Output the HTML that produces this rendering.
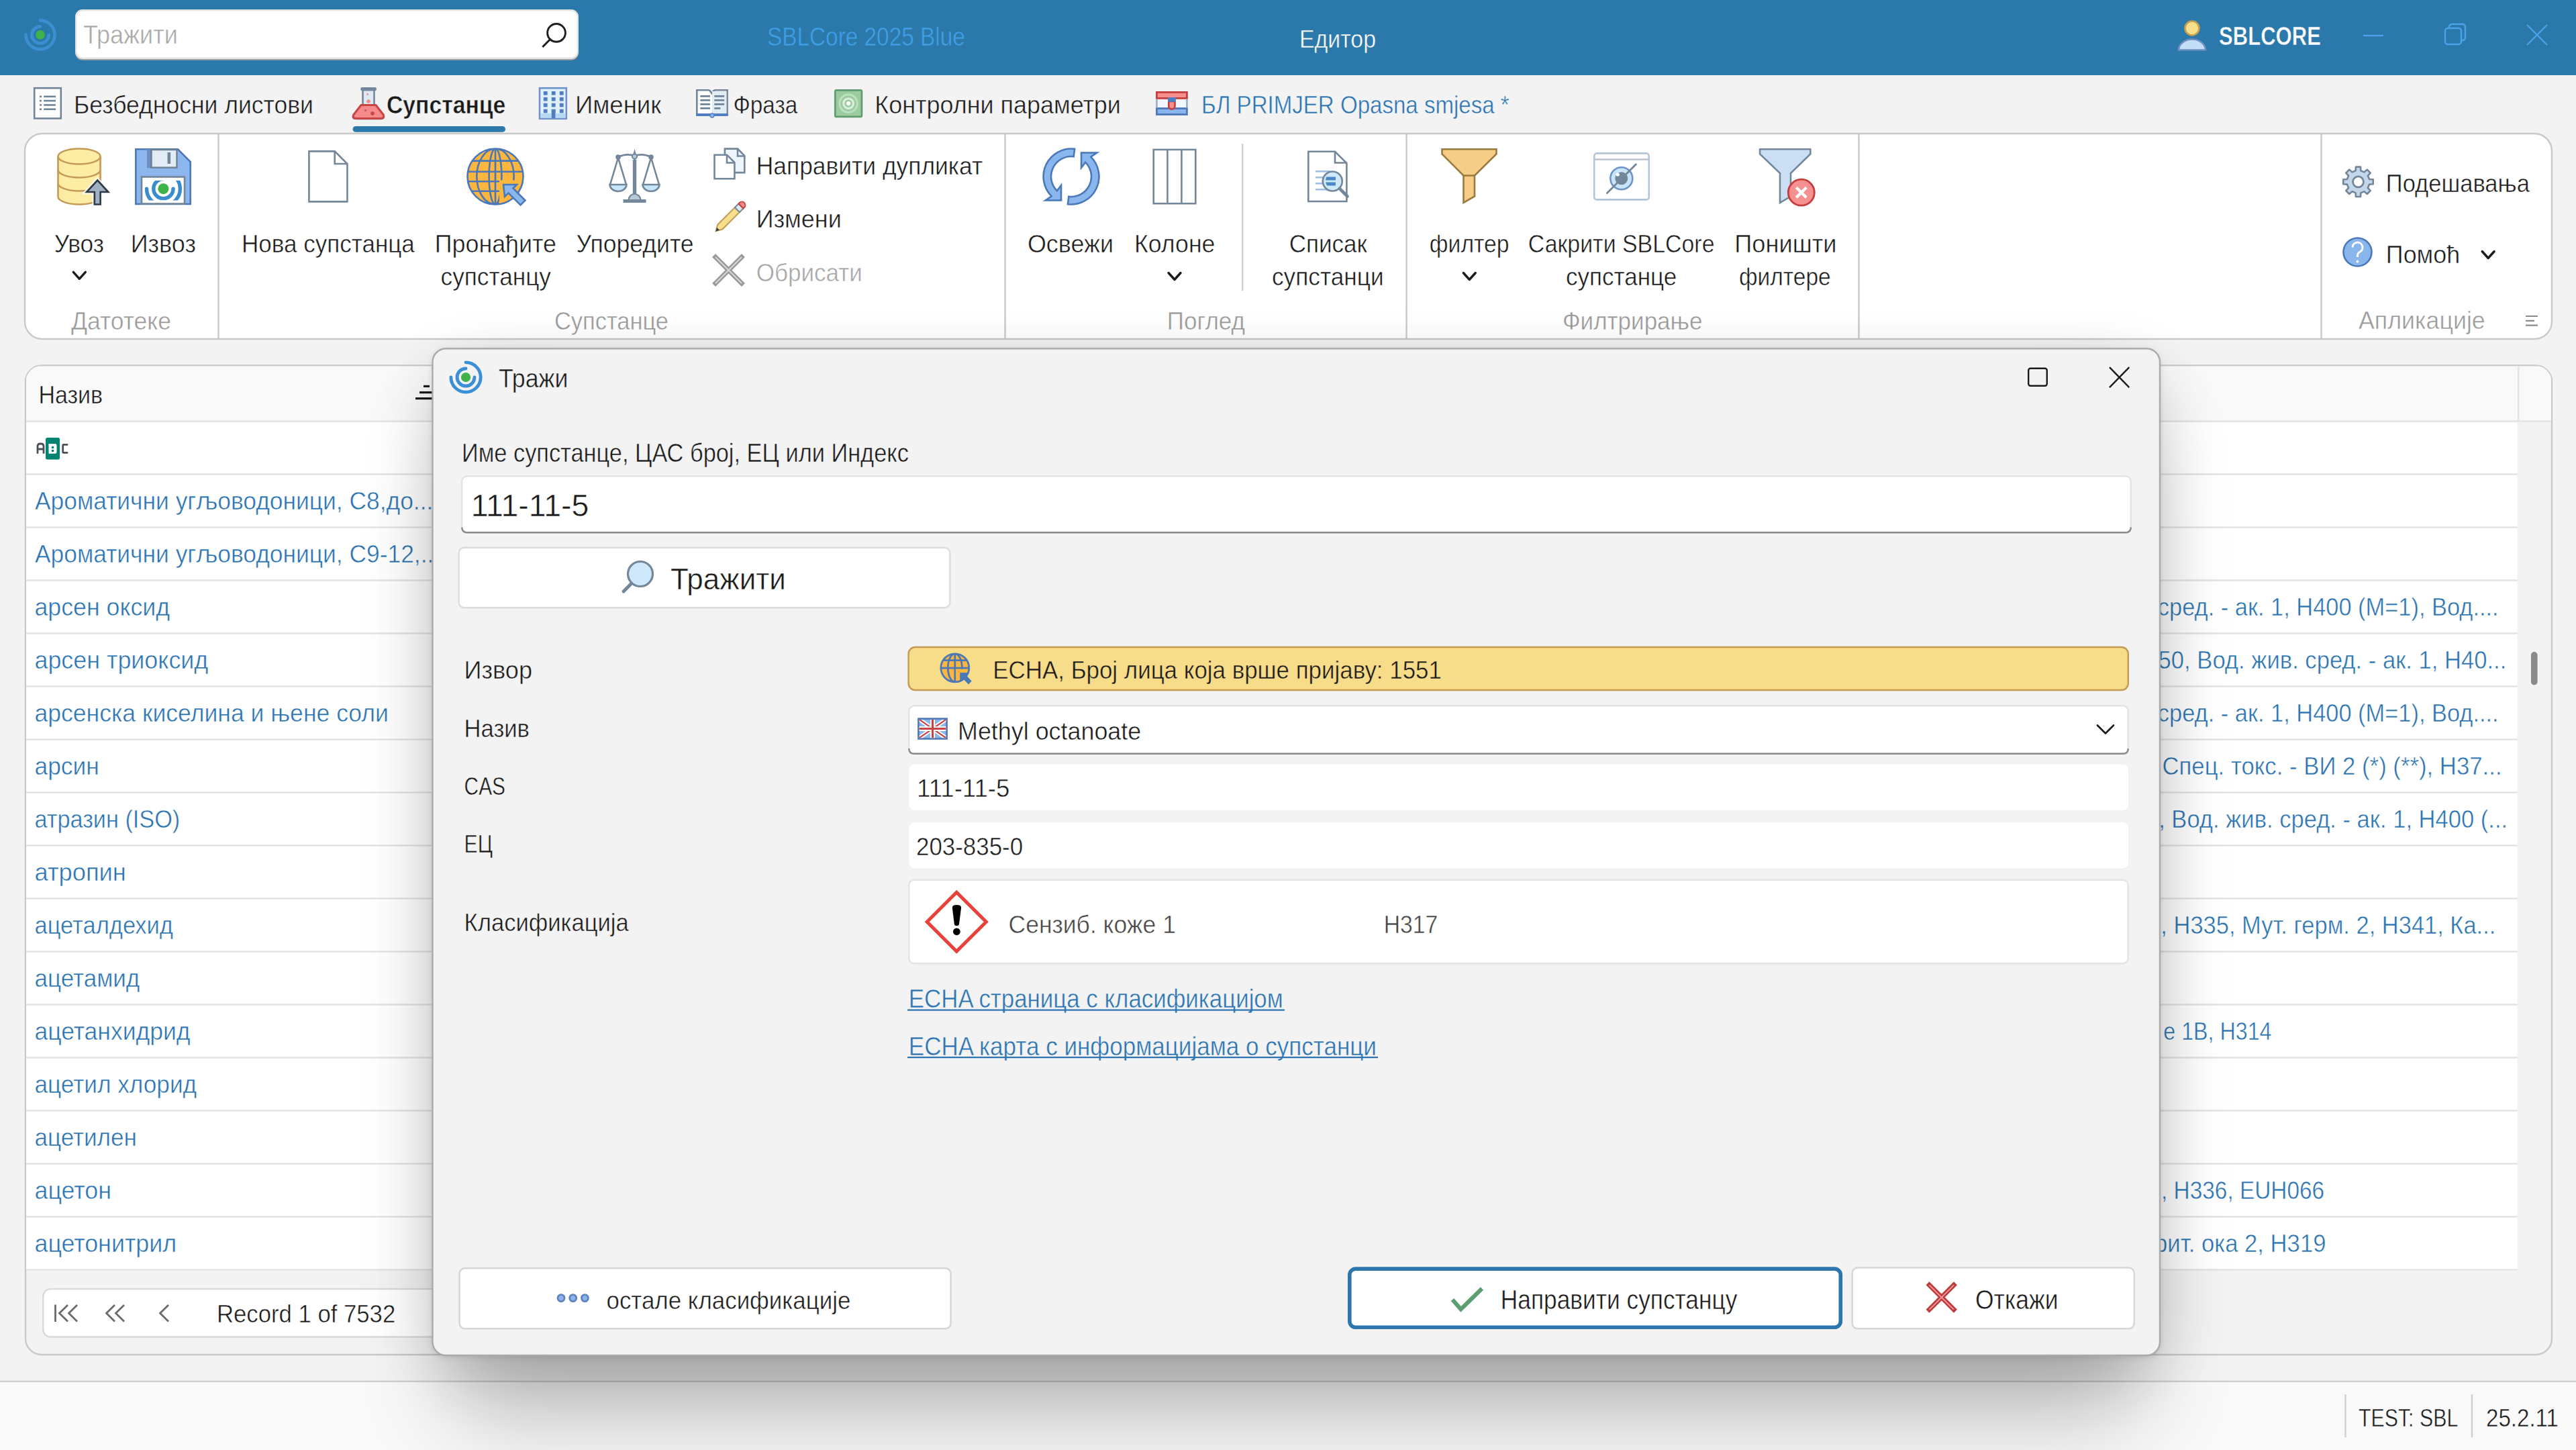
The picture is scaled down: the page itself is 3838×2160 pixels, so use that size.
<!DOCTYPE html>
<html><head><meta charset="utf-8"><title>SBLCore</title><style>html,body{margin:0;padding:0;background:#f3f3f3;overflow:hidden;width:3838px;height:2160px}</style></head><body><svg width="3838" height="2160" viewBox="0 0 3838 2160" style="display:block;font-family:'Liberation Sans',sans-serif">
<defs>
<filter id="dsh" x="-20%" y="-20%" width="140%" height="140%"><feGaussianBlur stdDeviation="48"/></filter><filter id="dsh2" x="-30%" y="-30%" width="160%" height="160%"><feGaussianBlur stdDeviation="70"/></filter><filter id="dsh3" x="-5%" y="-5%" width="110%" height="110%"><feGaussianBlur stdDeviation="5"/></filter>
<filter id="sbsh" x="-5%" y="-30%" width="110%" height="160%"><feGaussianBlur stdDeviation="1.5"/></filter>
<clipPath id="gridclip"><rect x="38" y="544" width="3764" height="1474" rx="26"/></clipPath>
</defs>
<rect x="0" y="0" width="3838" height="2160" fill="#f3f3f3"/>
<rect x="0" y="0" width="3838" height="112" fill="#2b78ab"/>
<path d="M60.00 30.40A21.50 21.50 0 1 1 38.50 51.90" fill="none" stroke="#3a8fd0" stroke-width="4.70" stroke-linecap="round"/>
<path d="M72.60 51.90A12.60 12.60 0 1 1 60.00 39.30" fill="none" stroke="#3a8fd0" stroke-width="4.70" stroke-linecap="round"/>
<circle cx="60" cy="51.9" r="6.90" fill="#3db34a"/>
<rect x="112" y="14" width="750" height="75.7" rx="11" fill="#a2a2a2"/>
<rect x="113.2" y="15.2" width="747.6" height="71.6" rx="10" fill="#ffffff" stroke="#e4e4e4" stroke-width="2.4"/>
<text transform="translate(124.00 65.20) scale(0.9079 1)" font-size="39.68" font-weight="normal" fill="#a9a9a9" stroke="#ffffff" stroke-width="0.5">Тражити</text>
<circle cx="829" cy="48.9" r="13.4" fill="none" stroke="#1e1e1e" stroke-width="2.9"/>
<line x1="819" y1="59.3" x2="808.3" y2="70" stroke="#1e1e1e" stroke-width="3"/>
<text transform="translate(1143.00 68.10) scale(0.8407 1)" font-size="39.68" font-weight="normal" fill="#3f9fe6" stroke="#2b78ab" stroke-width="0.5">SBLCore 2025 Blue</text>
<text transform="translate(1936.00 70.70) scale(0.8955 1)" font-size="37.79" font-weight="normal" fill="#ffffff" stroke="#2b78ab" stroke-width="0.5">Едитор</text>
<circle cx="3266" cy="42" r="10.5" fill="#f7df8b" stroke="#c3a04e" stroke-width="2.6"/>
<path d="M3246 74.5 A20 16 0 0 1 3286 74.5 Z" fill="#c3def6" stroke="#6f8fbf" stroke-width="2.6"/>
<text transform="translate(3306.00 67.30) scale(0.8098 1)" font-size="38.37" font-weight="bold" fill="#ffffff" stroke="#2b78ab" stroke-width="0.5">SBLCORE</text>
<line x1="3521" y1="53" x2="3551" y2="53" stroke="#4aa3e8" stroke-width="2.4"/>
<rect x="3643" y="42" width="24" height="24" rx="4" fill="none" stroke="#4aa3e8" stroke-width="2.4"/>
<path d="M3649 42 V40 a4 4 0 0 1 4 -4 H3669 a4 4 0 0 1 4 4 V56 a4 4 0 0 1 -4 4 H3667" fill="none" stroke="#4aa3e8" stroke-width="2.4"/>
<path d="M3765 37 L3795 67 M3795 37 L3765 67" stroke="#4aa3e8" stroke-width="2.4"/>
<rect x="51.2" y="131.2" width="39.6" height="45.2" fill="#ffffff" stroke="#71859a" stroke-width="2.6"/>
<rect x="59" y="142.5" width="3" height="2.6" fill="#71859a"/><rect x="65.2" y="142.5" width="17.8" height="2.6" fill="#71859a"/>
<rect x="59" y="148.8" width="3" height="2.6" fill="#71859a"/><rect x="65.2" y="148.8" width="17.8" height="2.6" fill="#71859a"/>
<rect x="59" y="155.1" width="3" height="2.6" fill="#71859a"/><rect x="65.2" y="155.1" width="17.8" height="2.6" fill="#71859a"/>
<rect x="59" y="161.4" width="3" height="2.6" fill="#71859a"/><rect x="65.2" y="161.4" width="17.8" height="2.6" fill="#71859a"/>
<text transform="translate(110.00 168.80) scale(0.9475 1)" font-size="37.50" font-weight="normal" fill="#1b1b1b" stroke="#f3f3f3" stroke-width="0.5">Безбедносни листови</text>
<path d="M540.5 134 V155 L526.5 171.5 Q524 177 530 177 H567.5 Q573.5 177 571 171.5 L557.5 155 V134 Z" fill="#dfe9f2" stroke="#74879a" stroke-width="2.6" stroke-linejoin="round"/>
<path d="M538 156.5 H560 L571.3 171 Q573.2 176.6 567.2 176.6 H530.8 Q524.8 176.6 526.7 171 Z" fill="#f48a8a" stroke="#c94444" stroke-width="3" stroke-linejoin="round"/>
<rect x="537.3" y="130" width="23.6" height="5.2" rx="2" fill="#74879a"/>
<circle cx="547.5" cy="140.5" r="1.4" fill="#f48a8a"/><circle cx="549" cy="151" r="2.8" fill="#f48a8a"/><circle cx="544.5" cy="164.5" r="1.3" fill="#c94444"/><circle cx="555" cy="169" r="2.8" fill="#c94444"/>
<text transform="translate(576.00 169.30) scale(0.8924 1)" font-size="37.79" font-weight="bold" fill="#1b1b1b" stroke="#f3f3f3" stroke-width="0.5">Супстанце</text>
<rect x="525.6" y="188" width="227.4" height="8.8" rx="4.4" fill="#2b78ab"/>
<rect x="804" y="131.2" width="39.8" height="45.6" fill="#dff0fb" stroke="#6f93c8" stroke-width="2.6"/>
<rect x="805.3" y="169" width="37.2" height="6.5" fill="#b6d9f4"/>
<rect x="809.8" y="136.0" width="5.8" height="5.6" fill="#4f7fc0"/>
<rect x="821.8" y="136.0" width="5.8" height="5.6" fill="#4f7fc0"/>
<rect x="833.8" y="136.0" width="5.8" height="5.6" fill="#4f7fc0"/>
<rect x="809.8" y="144.9" width="5.8" height="5.6" fill="#4f7fc0"/>
<rect x="821.8" y="144.9" width="5.8" height="5.6" fill="#4f7fc0"/>
<rect x="833.8" y="144.9" width="5.8" height="5.6" fill="#4f7fc0"/>
<rect x="809.8" y="153.8" width="5.8" height="5.6" fill="#4f7fc0"/>
<rect x="821.8" y="153.8" width="5.8" height="5.6" fill="#4f7fc0"/>
<rect x="833.8" y="153.8" width="5.8" height="5.6" fill="#4f7fc0"/>
<rect x="809.8" y="162.7" width="5.8" height="5.6" fill="#4f7fc0"/>
<rect x="821.8" y="162.7" width="5.8" height="5.6" fill="#4f7fc0"/>
<rect x="833.8" y="162.7" width="5.8" height="5.6" fill="#4f7fc0"/>
<rect x="821.8" y="163" width="5.6" height="13" fill="#4f7fc0"/>
<text transform="translate(857.00 168.80) scale(0.9742 1)" font-size="37.50" font-weight="normal" fill="#1b1b1b" stroke="#f3f3f3" stroke-width="0.5">Именик</text>
<path d="M1038.3 134.3 H1055 Q1058 134.3 1059 137 L1060.5 139 L1062 137 Q1063 134.3 1066 134.3 H1083.6 V170.8 H1038.3 Z" fill="#ffffff" stroke="#74879a" stroke-width="2.6"/>
<rect x="1061" y="136" width="21.3" height="33.5" fill="#e1ecf4"/>
<rect x="1037" y="169" width="48" height="4" rx="1" fill="#4f7fc0"/><circle cx="1061" cy="172" r="3" fill="#8ab4ea" stroke="#4f7fc0" stroke-width="1.3"/>
<rect x="1043.3" y="142" width="14.8" height="2.6" fill="#6b7f96"/><rect x="1064.3" y="142" width="14.8" height="2.6" fill="#6b7f96"/>
<rect x="1043.3" y="148" width="14.8" height="2.6" fill="#6b7f96"/><rect x="1064.3" y="148" width="14.8" height="2.6" fill="#6b7f96"/>
<rect x="1043.3" y="154" width="14.8" height="2.6" fill="#6b7f96"/><rect x="1064.3" y="154" width="14.8" height="2.6" fill="#6b7f96"/>
<rect x="1043.3" y="160" width="14.8" height="2.6" fill="#6b7f96"/><rect x="1064.3" y="160" width="9" height="2.6" fill="#6b7f96"/>
<text transform="translate(1092.40 168.80) scale(0.8888 1)" font-size="37.50" font-weight="normal" fill="#1b1b1b" stroke="#f3f3f3" stroke-width="0.5">Фраза</text>
<rect x="1244.3" y="134.3" width="39.6" height="39.6" rx="2" fill="#9bcb9f" stroke="#5f9d74" stroke-width="2.8"/>
<circle cx="1264.1" cy="154.1" r="13.2" fill="none" stroke="#bbe0bf" stroke-width="3.1"/>
<circle cx="1264.1" cy="154.1" r="7.4" fill="none" stroke="#dcefdd" stroke-width="3.1"/>
<circle cx="1264.1" cy="154.1" r="3.1" fill="#ffffff"/>
<text transform="translate(1303.30 168.80) scale(0.9582 1)" font-size="37.50" font-weight="normal" fill="#1b1b1b" stroke="#f3f3f3" stroke-width="0.5">Контролни параметри</text>
<rect x="1722" y="136" width="47.9" height="35.9" fill="#f2f8fd"/>
<rect x="1723.4" y="137.4" width="45" height="9" fill="#f68f8f" stroke="#c63d3d" stroke-width="2.8"/>
<rect x="1723.4" y="161.5" width="45" height="9" fill="#8ab6ee" stroke="#4f78b8" stroke-width="2.8"/>
<rect x="1722" y="147.5" width="2.8" height="13" fill="#9fb2c8"/><rect x="1767" y="147.5" width="2.8" height="13" fill="#9fb2c8"/>
<path d="M1741.3 151 V158 A4.6 4.6 0 0 0 1750.5 158 V151 Z" fill="#f68f8f" stroke="#c63d3d" stroke-width="2.6"/>
<rect x="1740" y="145" width="11.8" height="6.8" fill="#4f7fc0"/>
<text transform="translate(1790.00 169.00) scale(0.8753 1)" font-size="37.79" font-weight="normal" fill="#2b73b1" stroke="#f3f3f3" stroke-width="0.5">БЛ PRIMJER Opasna smjesa *</text>
<rect x="37" y="199" width="3765" height="306" rx="26" fill="#ffffff" stroke="#c9c9c9" stroke-width="2.4"/>
<rect x="324.3" y="200" width="2.4" height="304" fill="#c9c9c9"/>
<rect x="1496.3" y="200" width="2.4" height="304" fill="#c9c9c9"/>
<rect x="2094.3" y="200" width="2.4" height="304" fill="#c9c9c9"/>
<rect x="2768.3" y="200" width="2.4" height="304" fill="#c9c9c9"/>
<rect x="3457.3" y="200" width="2.4" height="304" fill="#c9c9c9"/>
<rect x="1850" y="214" width="2.4" height="219" fill="#cfcfcf"/>
<path d="M86.5 233 V293 A31.5 11.5 0 0 0 149.5 293 V233" fill="#fdeca3" stroke="#c39a56" stroke-width="2.6"/>
<ellipse cx="118" cy="233" rx="31.5" ry="11.5" fill="#fdeca3" stroke="#c39a56" stroke-width="2.6"/>
<path d="M86.5 253 A31.5 11.5 0 0 0 149.5 253 M86.5 273 A31.5 11.5 0 0 0 149.5 273" fill="none" stroke="#c39a56" stroke-width="2.6"/>
<path d="M145.2 268.5 L161.3 286 H149.6 V304.5 H140.8 V286 H129.1 Z" fill="#ffffff" stroke="#ffffff" stroke-width="7" stroke-linejoin="miter" opacity="0.8"/>
<path d="M145.2 268.5 L161.3 286 H149.6 V304.5 H140.8 V286 H129.1 Z" fill="#9fb0c2" stroke="#2f3a48" stroke-width="2.6" stroke-linejoin="miter"/>
<text transform="translate(80.80 376.20) scale(0.9416 1)" font-size="37.50" font-weight="normal" fill="#1b1b1b" stroke="#ffffff" stroke-width="0.5">Увоз</text>
<path d="M109.3 405.3 L118.3 415.3 L127.3 405.3" fill="none" stroke="#1b1b1b" stroke-width="3.4" stroke-linecap="round" stroke-linejoin="round"/>
<path d="M202.3 222.3 H265 L283.7 241 V304 H202.3 Z" fill="#8cb6ee" stroke="#4f78b8" stroke-width="2.6"/>
<rect x="219" y="222.3" width="6" height="28" fill="#6d8fbf"/>
<rect x="225.5" y="223" width="38" height="26.6" fill="#e1ecf4" stroke="#6f8092" stroke-width="2.4"/>
<rect x="249.5" y="227" width="4.6" height="17" fill="#74879a"/>
<rect x="211" y="263.5" width="64" height="40" fill="#ffffff" stroke="#74879a" stroke-width="2.6"/>
<clipPath id="flc"><rect x="213" y="269" width="60" height="29.5"/></clipPath>
<g clip-path="url(#flc)">
<path d="M243.40 256.26A24.94 24.94 0 1 1 218.46 281.20" fill="none" stroke="#3a8ccf" stroke-width="5.45" stroke-linecap="round"/>
<path d="M258.02 281.20A14.62 14.62 0 1 1 243.40 266.58" fill="none" stroke="#3a8ccf" stroke-width="5.45" stroke-linecap="round"/>
<circle cx="243.4" cy="281.2" r="8.00" fill="#3db34a"/>
</g>
<text transform="translate(194.70 376.20) scale(0.9605 1)" font-size="37.50" font-weight="normal" fill="#1b1b1b" stroke="#ffffff" stroke-width="0.5">Извоз</text>
<path d="M460.4 225.4 H498.7 L517.4 244 V300.4 H460.4 Z" fill="#ffffff" stroke="#74879a" stroke-width="2.6"/>
<path d="M498.7 225.4 V244 H517.4" fill="none" stroke="#74879a" stroke-width="2.6"/>
<text transform="translate(360.00 376.20) scale(0.9348 1)" font-size="37.50" font-weight="normal" fill="#1b1b1b" stroke="#ffffff" stroke-width="0.5">Нова супстанца</text>
<clipPath id="gl1"><circle cx="738" cy="263" r="41.0"/></clipPath>
<circle cx="738" cy="263" r="41.5" fill="#fdb73f"/>
<g clip-path="url(#gl1)" stroke="#4a78b8" stroke-width="2.6" fill="none"><line x1="694.5" y1="239.59" x2="781.5" y2="239.59"/><line x1="694.5" y1="255.78" x2="781.5" y2="255.78"/><line x1="694.5" y1="270.30" x2="781.5" y2="270.30"/><line x1="694.5" y1="284.75" x2="781.5" y2="284.75"/><line x1="738" y1="219.5" x2="738" y2="306.5"/><ellipse cx="738" cy="263" rx="9.38" ry="41.5"/><ellipse cx="738" cy="263" rx="27.68" ry="41.5"/></g>
<rect x="744" y="268.5" width="45.5" height="45.5" fill="#fdb73f" clip-path="url(#gl1)"/>
<circle cx="738" cy="263" r="41.5" fill="none" stroke="#4a78b8" stroke-width="2.6"/>
<path d="M750 275 L770 275 L764.5 280.5 L782.5 298.5 L775.5 305.5 L757.5 287.5 L752 293 Z" fill="#8ab6ee" stroke="#4a78b8" stroke-width="2.6" stroke-linejoin="miter"/>
<text transform="translate(647.80 376.20) scale(0.9557 1)" font-size="37.50" font-weight="normal" fill="#1b1b1b" stroke="#ffffff" stroke-width="0.5">Пронађите</text>
<text transform="translate(656.60 424.60) scale(0.9389 1)" font-size="37.50" font-weight="normal" fill="#1b1b1b" stroke="#ffffff" stroke-width="0.5">супстанцу</text>
<g stroke="#74879a" fill="none" stroke-width="2.6"><path d="M921 234 Q933 228 945.5 232 Q958 228 970 234"/><line x1="945.5" y1="228" x2="945.5" y2="296"/><path d="M921 235 L909 275 M921 235 L933 275 M970 235 L958 275 M970 235 L982 275"/></g>
<path d="M908.5 275 H933.5 A12.5 10 0 0 1 908.5 275 Z" fill="#c8e6fb" stroke="#74879a" stroke-width="2.6"/>
<path d="M957.5 275 H982.5 A12.5 10 0 0 1 957.5 275 Z" fill="#c8e6fb" stroke="#74879a" stroke-width="2.6"/>
<circle cx="921" cy="234" r="3.8" fill="#74879a"/><circle cx="970" cy="234" r="3.8" fill="#74879a"/><circle cx="945.5" cy="233" r="3.6" fill="#b8c9d8" stroke="#74879a" stroke-width="2"/>
<path d="M943.5 229 L945.5 222 L947.5 229 Z" fill="#74879a"/><rect x="942.8" y="238" width="5.4" height="60" fill="#74879a"/>
<path d="M936.5 298 A9 9 0 0 1 954.5 298 Z" fill="#b8c9d8" stroke="#74879a" stroke-width="2.2"/><rect x="928.5" y="297" width="34" height="5" fill="#74879a"/>
<text transform="translate(858.40 376.20) scale(0.9491 1)" font-size="37.50" font-weight="normal" fill="#1b1b1b" stroke="#ffffff" stroke-width="0.5">Упоредите</text>
<path d="M1079.9 221.6 H1099 L1109.3 232 V257.1 H1079.9 Z" fill="#eef5fc" stroke="#74879a" stroke-width="2.6"/>
<path d="M1099 221.6 V232.5 H1109.3" fill="none" stroke="#74879a" stroke-width="2.6"/>
<path d="M1064.5 230.7 H1083 L1094.4 242 V266.2 H1064.5 Z" fill="#ffffff" stroke="#74879a" stroke-width="2.6"/>
<path d="M1083 230.7 V242.5 H1094.4" fill="none" stroke="#74879a" stroke-width="2.6"/>
<text transform="translate(1126.80 259.60) scale(0.9438 1)" font-size="37.50" font-weight="normal" fill="#1b1b1b" stroke="#ffffff" stroke-width="0.5">Направити дупликат</text>
<g transform="translate(1087 323.9) rotate(-45)"><path d="M-29 0 L-20 -5 H16 V5 H-20 Z" fill="#f7de8a" stroke="#c39a56" stroke-width="2"/><rect x="16" y="-5" width="8" height="10" fill="#dbe7f3" stroke="#74879a" stroke-width="2"/><path d="M24 -5 H26 A5 5 0 0 1 26 5 H24 Z" fill="#f48a8a" stroke="#c94444" stroke-width="2"/><path d="M-29 0 L-24 -2.8 V2.8 Z" fill="#2f3a48"/></g>
<text transform="translate(1126.80 339.30) scale(0.9585 1)" font-size="37.50" font-weight="normal" fill="#1b1b1b" stroke="#ffffff" stroke-width="0.5">Измени</text>
<path d="M1066 383 L1105 422 M1105 383 L1066 422" stroke="#9a9a9a" stroke-width="7" stroke-linecap="square"/>
<path d="M1066 383 L1105 422 M1105 383 L1066 422" stroke="#d6d6d6" stroke-width="2"/>
<text transform="translate(1126.80 419.00) scale(0.9339 1)" font-size="37.50" font-weight="normal" fill="#a6a6a6" stroke="#ffffff" stroke-width="0.5">Обрисати</text>
<text transform="translate(106.00 491.00) scale(0.9460 1)" font-size="37.50" font-weight="normal" fill="#9a9a9a" stroke="#ffffff" stroke-width="0.5">Датотеке</text>
<text transform="translate(826.00 491.00) scale(0.9184 1)" font-size="37.50" font-weight="normal" fill="#9a9a9a" stroke="#ffffff" stroke-width="0.5">Супстанце</text>
<path d="M1601.1 221.8 A41.5 41.5 0 0 0 1566.7 292.3 L1557.7 298.5 L1581.0 298.5 L1581.0 276.0 L1574.8 284.2 A30.0 30.0 0 0 1 1599.7 233.2 Z" fill="#8ab6ee" stroke="#4a78b8" stroke-width="2.6" stroke-linejoin="miter"/>
<path d="M1590.9 304.2 A41.5 41.5 0 0 0 1625.3 233.7 L1634.3 227.5 L1611.0 227.5 L1611.0 250.0 L1617.2 241.8 A30.0 30.0 0 0 1 1592.3 292.8 Z" fill="#8ab6ee" stroke="#4a78b8" stroke-width="2.6" stroke-linejoin="miter"/>
<text transform="translate(1531.00 376.20) scale(0.9559 1)" font-size="37.50" font-weight="normal" fill="#1b1b1b" stroke="#ffffff" stroke-width="0.5">Освежи</text>
<rect x="1718.7" y="222.9" width="62.6" height="80.3" fill="#ffffff" stroke="#74879a" stroke-width="2.6"/>
<path d="M1739.4 223 V303 M1760.4 223 V303" stroke="#74879a" stroke-width="2.6"/>
<text transform="translate(1690.00 376.20) scale(0.9518 1)" font-size="37.50" font-weight="normal" fill="#1b1b1b" stroke="#ffffff" stroke-width="0.5">Колоне</text>
<path d="M1741.0 406.5 L1750.0 416.5 L1759.0 406.5" fill="none" stroke="#1b1b1b" stroke-width="3.4" stroke-linecap="round" stroke-linejoin="round"/>
<path d="M1949.3 225.8 H1989 L2006.4 243 V300 H1949.3 Z" fill="#ffffff" stroke="#74879a" stroke-width="2.6"/>
<path d="M1989 225.8 V242.5 H2006.4" fill="none" stroke="#74879a" stroke-width="2.6"/>
<rect x="1960" y="254.0" width="22" height="2.6" fill="#9fc0e6"/>
<rect x="1960" y="263.0" width="22" height="2.6" fill="#9fc0e6"/>
<rect x="1960" y="272.0" width="22" height="2.6" fill="#9fc0e6"/>
<rect x="1960" y="281.0" width="22" height="2.6" fill="#9fc0e6"/>
<circle cx="1985.3" cy="270" r="14.5" fill="#cfe8fb" stroke="#74879a" stroke-width="2.6"/>
<path d="M1976 263.5 H1990 V268.5 H1975 Z M1975 271.5 H1990 V276.5 H1977 Z" fill="#4a86c8"/>
<line x1="1996" y1="281" x2="2007.5" y2="292.5" stroke="#74879a" stroke-width="4.6" stroke-linecap="round"/>
<text transform="translate(1920.70 376.20) scale(0.9341 1)" font-size="37.50" font-weight="normal" fill="#1b1b1b" stroke="#ffffff" stroke-width="0.5">Списак</text>
<text transform="translate(1895.00 424.60) scale(0.9397 1)" font-size="37.50" font-weight="normal" fill="#1b1b1b" stroke="#ffffff" stroke-width="0.5">супстанци</text>
<text transform="translate(1738.80 491.00) scale(0.9333 1)" font-size="37.50" font-weight="normal" fill="#9a9a9a" stroke="#ffffff" stroke-width="0.5">Поглед</text>
<path d="M2148.5 222.3 H2229.5 V229.5 L2197 261.5 V292.5 L2180.5 302 V261.5 L2148.5 229.5 Z" fill="#f5cd86" stroke="#9a7a3e" stroke-width="2.6" stroke-linejoin="miter"/>
<path d="M2180.5 261.5 H2197" stroke="#9a7a3e" stroke-width="2.6"/>
<text transform="translate(2129.80 376.20) scale(0.8993 1)" font-size="37.50" font-weight="normal" fill="#1b1b1b" stroke="#ffffff" stroke-width="0.5">филтер</text>
<path d="M2180.3 406.5 L2189.3 416.5 L2198.3 406.5" fill="none" stroke="#1b1b1b" stroke-width="3.4" stroke-linecap="round" stroke-linejoin="round"/>
<rect x="2375.2" y="228.4" width="81.6" height="69" rx="4" fill="#ffffff" stroke="#b5c4d2" stroke-width="2.6"/>
<line x1="2375.2" y1="237.5" x2="2456.8" y2="237.5" stroke="#b5c4d2" stroke-width="2.6"/>
<circle cx="2415.8" cy="265.7" r="16.5" fill="#c8e6fb" stroke="#6f93c8" stroke-width="2.6"/>
<circle cx="2415.8" cy="265.7" r="9.5" fill="#74879a"/><circle cx="2410.3" cy="260" r="2.6" fill="#ffffff"/>
<line x1="2394.5" y1="287.4" x2="2437.4" y2="244.8" stroke="#74879a" stroke-width="2.8" stroke-linecap="round"/>
<text transform="translate(2276.80 376.20) scale(0.9040 1)" font-size="37.50" font-weight="normal" fill="#1b1b1b" stroke="#ffffff" stroke-width="0.5">Сакрити SBLCore</text>
<text transform="translate(2333.00 424.60) scale(0.9344 1)" font-size="37.50" font-weight="normal" fill="#1b1b1b" stroke="#ffffff" stroke-width="0.5">супстанце</text>
<path d="M2622.1 222.3 H2697.3 V229.5 L2668 258 V292.5 L2652 302 V258 L2622.1 229.5 Z" fill="#cbdef4" stroke="#74879a" stroke-width="2.6" stroke-linejoin="miter"/>
<circle cx="2683.8" cy="286.7" r="19.5" fill="#f68f8f" stroke="#c63d3d" stroke-width="2.8"/>
<path d="M2676.3 279.2 L2691.3 294.2 M2691.3 279.2 L2676.3 294.2" stroke="#ffffff" stroke-width="4.4"/>
<text transform="translate(2584.30 376.20) scale(0.9651 1)" font-size="37.50" font-weight="normal" fill="#1b1b1b" stroke="#ffffff" stroke-width="0.5">Поништи</text>
<text transform="translate(2591.00 424.60) scale(0.8941 1)" font-size="37.50" font-weight="normal" fill="#1b1b1b" stroke="#ffffff" stroke-width="0.5">филтере</text>
<text transform="translate(2328.00 491.00) scale(0.9338 1)" font-size="37.50" font-weight="normal" fill="#9a9a9a" stroke="#ffffff" stroke-width="0.5">Филтрирање</text>
<path d="M3530.06 266.98 L3535.72 267.28 L3535.72 274.32 L3530.06 274.62 L3527.92 279.81 L3531.70 284.03 L3526.73 289.00 L3522.51 285.22 L3517.32 287.36 L3517.02 293.02 L3509.98 293.02 L3509.68 287.36 L3504.49 285.22 L3500.27 289.00 L3495.30 284.03 L3499.08 279.81 L3496.94 274.62 L3491.28 274.32 L3491.28 267.28 L3496.94 266.98 L3499.08 261.79 L3495.30 257.57 L3500.27 252.60 L3504.49 256.38 L3509.68 254.24 L3509.98 248.58 L3517.02 248.58 L3517.32 254.24 L3522.51 256.38 L3526.73 252.60 L3531.70 257.57 L3527.92 261.79 Z" fill="#c4d6ea" stroke="#74879a" stroke-width="2.6" stroke-linejoin="round"/>
<circle cx="3513.5" cy="270.8" r="8" fill="#ffffff" stroke="#74879a" stroke-width="2.8"/>
<text transform="translate(3554.80 286.30) scale(0.9217 1)" font-size="37.50" font-weight="normal" fill="#1b1b1b" stroke="#ffffff" stroke-width="0.5">Подешавања</text>
<circle cx="3512.5" cy="375.5" r="21" fill="#8ab6ee" stroke="#4a78b8" stroke-width="2.6"/>
<path d="M3505 368.5 A7.5 7.5 0 1 1 3515.5 375.5 Q3512.5 377 3512.5 381 V383" fill="none" stroke="#ffffff" stroke-width="3"/>
<circle cx="3512.5" cy="389.5" r="1.9" fill="#ffffff"/>
<text transform="translate(3554.80 392.30) scale(0.9584 1)" font-size="37.50" font-weight="normal" fill="#1b1b1b" stroke="#ffffff" stroke-width="0.5">Помоћ</text>
<path d="M3698.2 374.5 L3707.2 384.5 L3716.2 374.5" fill="none" stroke="#1b1b1b" stroke-width="3.4" stroke-linecap="round" stroke-linejoin="round"/>
<text transform="translate(3514.00 490.40) scale(0.9545 1)" font-size="37.50" font-weight="normal" fill="#9a9a9a" stroke="#ffffff" stroke-width="0.5">Апликације</text>
<path d="M3763 471 H3781 M3763 477.8 H3776 M3763 484.6 H3781" stroke="#8a8a8a" stroke-width="2.2"/>
<rect x="38" y="544.5" width="3764" height="1473.5" rx="24" fill="#f3f3f3" stroke="#c9c9c9" stroke-width="2.4"/>
<g clip-path="url(#gridclip)">
<rect x="39" y="545.5" width="3762" height="82" fill="#f9f9f9"/>
<rect x="39" y="628.5" width="3711.5" height="1263" fill="#ffffff"/>
<rect x="39" y="626.3" width="3762" height="2.4" fill="#e3e3e3"/>
<rect x="3751" y="545" width="2.4" height="82" fill="#e3e3e3"/>
<rect x="39" y="705.3" width="3711.5" height="2.4" fill="#e3e3e3"/>
<rect x="39" y="784.3" width="3711.5" height="2.4" fill="#e3e3e3"/>
<rect x="39" y="863.3" width="3711.5" height="2.4" fill="#e3e3e3"/>
<rect x="39" y="942.3" width="3711.5" height="2.4" fill="#e3e3e3"/>
<rect x="39" y="1021.3" width="3711.5" height="2.4" fill="#e3e3e3"/>
<rect x="39" y="1100.3" width="3711.5" height="2.4" fill="#e3e3e3"/>
<rect x="39" y="1179.3" width="3711.5" height="2.4" fill="#e3e3e3"/>
<rect x="39" y="1258.3" width="3711.5" height="2.4" fill="#e3e3e3"/>
<rect x="39" y="1337.3" width="3711.5" height="2.4" fill="#e3e3e3"/>
<rect x="39" y="1416.3" width="3711.5" height="2.4" fill="#e3e3e3"/>
<rect x="39" y="1495.3" width="3711.5" height="2.4" fill="#e3e3e3"/>
<rect x="39" y="1574.3" width="3711.5" height="2.4" fill="#e3e3e3"/>
<rect x="39" y="1653.3" width="3711.5" height="2.4" fill="#e3e3e3"/>
<rect x="39" y="1732.3" width="3711.5" height="2.4" fill="#e3e3e3"/>
<rect x="39" y="1811.3" width="3711.5" height="2.4" fill="#e3e3e3"/>
<rect x="39" y="1890.3" width="3711.5" height="2.4" fill="#e3e3e3"/>
</g>
<text transform="translate(57.50 601.40) scale(0.8994 1)" font-size="37.79" font-weight="normal" fill="#1b1b1b" stroke="#f9f9f9" stroke-width="0.5">Назив</text>
<rect x="631" y="573.8" width="9" height="3.2" fill="#1b1b1b"/><rect x="625" y="583" width="22" height="3.2" fill="#1b1b1b"/><rect x="619" y="592" width="28" height="3.2" fill="#1b1b1b"/>
<rect x="68" y="652" width="21" height="32.6" rx="2.5" fill="#00846f"/>
<path d="M56 675.7 V665 Q56 661 60 661 H61 Q65 661 65 665 V675.7 M56 669 H65" fill="none" stroke="#4a5058" stroke-width="2.8"/>
<path d="M72.5 661 H82 Q84.5 661 84.5 664 V673 Q84.5 675.7 82 675.7 H72.5 Z" fill="#ffffff"/><rect x="77" y="665" width="3.2" height="3" fill="#00846f"/><rect x="77" y="670" width="3.2" height="3" fill="#00846f"/>
<path d="M101.2 662.4 H94.5 Q93.7 662.4 93.7 664 V673 Q93.7 674.3 94.5 674.3 H101.2" fill="none" stroke="#4a5058" stroke-width="2.8"/>
<text transform="translate(52.00 759.40) scale(0.9362 1)" font-size="37.79" font-weight="normal" fill="#2b73b1" stroke="#ffffff" stroke-width="0.5">Ароматични угљоводоници, C8,до...</text>
<text transform="translate(52.00 838.40) scale(0.9362 1)" font-size="37.79" font-weight="normal" fill="#2b73b1" stroke="#ffffff" stroke-width="0.5">Ароматични угљоводоници, C9-12,...</text>
<text transform="translate(51.50 917.40) scale(0.9452 1)" font-size="37.79" font-weight="normal" fill="#2b73b1" stroke="#ffffff" stroke-width="0.5">арсен оксид</text>
<text transform="translate(51.50 996.40) scale(0.9487 1)" font-size="37.79" font-weight="normal" fill="#2b73b1" stroke="#ffffff" stroke-width="0.5">арсен триоксид</text>
<text transform="translate(51.50 1075.40) scale(0.9408 1)" font-size="37.79" font-weight="normal" fill="#2b73b1" stroke="#ffffff" stroke-width="0.5">арсенска киселина и њене соли</text>
<text transform="translate(51.50 1154.40) scale(0.9349 1)" font-size="37.79" font-weight="normal" fill="#2b73b1" stroke="#ffffff" stroke-width="0.5">арсин</text>
<text transform="translate(51.50 1233.40) scale(0.9064 1)" font-size="37.79" font-weight="normal" fill="#2b73b1" stroke="#ffffff" stroke-width="0.5">атразин (ISO)</text>
<text transform="translate(51.50 1312.40) scale(0.9606 1)" font-size="37.79" font-weight="normal" fill="#2b73b1" stroke="#ffffff" stroke-width="0.5">атропин</text>
<text transform="translate(51.50 1391.40) scale(0.9129 1)" font-size="37.79" font-weight="normal" fill="#2b73b1" stroke="#ffffff" stroke-width="0.5">ацеталдехид</text>
<text transform="translate(51.50 1470.40) scale(0.9279 1)" font-size="37.79" font-weight="normal" fill="#2b73b1" stroke="#ffffff" stroke-width="0.5">ацетамид</text>
<text transform="translate(51.50 1549.40) scale(0.9397 1)" font-size="37.79" font-weight="normal" fill="#2b73b1" stroke="#ffffff" stroke-width="0.5">ацетанхидрид</text>
<text transform="translate(51.50 1628.40) scale(0.9310 1)" font-size="37.79" font-weight="normal" fill="#2b73b1" stroke="#ffffff" stroke-width="0.5">ацетил хлорид</text>
<text transform="translate(51.50 1707.40) scale(0.9276 1)" font-size="37.79" font-weight="normal" fill="#2b73b1" stroke="#ffffff" stroke-width="0.5">ацетилен</text>
<text transform="translate(51.50 1786.40) scale(0.9478 1)" font-size="37.79" font-weight="normal" fill="#2b73b1" stroke="#ffffff" stroke-width="0.5">ацетон</text>
<text transform="translate(51.50 1865.40) scale(0.9476 1)" font-size="37.79" font-weight="normal" fill="#2b73b1" stroke="#ffffff" stroke-width="0.5">ацетонитрил</text>
<text transform="translate(3135.24 917.40) scale(0.9107 1)" font-size="37.79" font-weight="normal" fill="#2b73b1" stroke="#ffffff" stroke-width="0.5">жив. сред. - ак. 1, H400 (M=1), Вод....</text>
<text transform="translate(3171.39 996.40) scale(0.9159 1)" font-size="37.79" font-weight="normal" fill="#2b73b1" stroke="#ffffff" stroke-width="0.5">H350, Вод. жив. сред. - ак. 1, H40...</text>
<text transform="translate(3135.24 1075.40) scale(0.9107 1)" font-size="37.79" font-weight="normal" fill="#2b73b1" stroke="#ffffff" stroke-width="0.5">жив. сред. - ак. 1, H400 (M=1), Вод....</text>
<text transform="translate(3119.08 1154.40) scale(0.9197 1)" font-size="37.79" font-weight="normal" fill="#2b73b1" stroke="#ffffff" stroke-width="0.5">H360, Спец. токс. - ВИ 2 (*) (**), H37...</text>
<text transform="translate(3133.53 1233.40) scale(0.9147 1)" font-size="37.79" font-weight="normal" fill="#2b73b1" stroke="#ffffff" stroke-width="0.5">H373, Вод. жив. сред. - ак. 1, H400 (...</text>
<text transform="translate(3136.97 1391.40) scale(0.9125 1)" font-size="37.79" font-weight="normal" fill="#2b73b1" stroke="#ffffff" stroke-width="0.5">H319, H335, Мут. герм. 2, H341, Ка...</text>
<text transform="translate(3223.31 1549.40) scale(0.8529 1)" font-size="37.79" font-weight="normal" fill="#2b73b1" stroke="#ffffff" stroke-width="0.5">е 1B, H314</text>
<text transform="translate(3140.17 1786.40) scale(0.8838 1)" font-size="37.79" font-weight="normal" fill="#2b73b1" stroke="#ffffff" stroke-width="0.5">H319, H336, EUH066</text>
<text transform="translate(3185.09 1865.40) scale(0.9176 1)" font-size="37.79" font-weight="normal" fill="#2b73b1" stroke="#ffffff" stroke-width="0.5">Ирит. ока 2, H319</text>
<rect x="3771" y="971" width="9.6" height="49.5" rx="4.8" fill="#8a8a8a"/>
<rect x="64.2" y="1920.1" width="1200" height="71.4" rx="11" fill="#ffffff" stroke="#dadada" stroke-width="2.4"/>
<path d="M82.5 1943.5 V1969" stroke="#6b6b6b" stroke-width="2.8"/>
<path d="M101 1944 L88.5 1956.3 L101 1968.6 M115 1944 L102.5 1956.3 L115 1968.6" fill="none" stroke="#6b6b6b" stroke-width="2.8"/>
<path d="M171 1944 L158.5 1956.3 L171 1968.6 M185 1944 L172.5 1956.3 L185 1968.6" fill="none" stroke="#6b6b6b" stroke-width="2.8"/>
<path d="M251 1944 L238.5 1956.3 L251 1968.6" fill="none" stroke="#6b6b6b" stroke-width="2.8"/>
<text transform="translate(323.00 1970.30) scale(0.9289 1)" font-size="37.36" font-weight="normal" fill="#1b1b1b" stroke="#ffffff" stroke-width="0.5">Record 1 of 7532</text>
<rect x="0" y="2058" width="3838" height="102" fill="#f9f9f9"/>
<rect x="0" y="2056.6" width="3838" height="2.4" fill="#d0d0d0"/>
<rect x="3493.3" y="2077" width="2.4" height="64" fill="#cfcfcf"/><rect x="3681.8" y="2077" width="2.4" height="64" fill="#cfcfcf"/>
<text transform="translate(3514.00 2124.60) scale(0.8026 1)" font-size="37.79" font-weight="normal" fill="#1b1b1b" stroke="#f9f9f9" stroke-width="0.5">TEST: SBL</text>
<text transform="translate(3704.00 2124.60) scale(0.8759 1)" font-size="37.79" font-weight="normal" fill="#1b1b1b" stroke="#f9f9f9" stroke-width="0.5">25.2.11</text>
<rect x="654.5" y="549.3" width="2553.5" height="1489.7" rx="20" fill="#000000" opacity="0.16" filter="url(#dsh)"/>
<rect x="674.5" y="619.3" width="2513.5" height="1489.7" rx="20" fill="#000000" opacity="0.24" filter="url(#dsh2)"/>
<rect x="644.5" y="521.3" width="2573.5" height="1499.7" rx="20" fill="#000000" opacity="0.12" filter="url(#dsh3)"/>
<rect x="644.5" y="519.3" width="2573.5" height="1499.7" rx="20" fill="#f3f3f3" stroke="#ababab" stroke-width="2.4"/>
<g transform="translate(694 562) scale(1.03) translate(-60 -51.9)">
<path d="M60.00 30.40A21.50 21.50 0 1 1 38.50 51.90" fill="none" stroke="#3b8fd6" stroke-width="4.70" stroke-linecap="round"/>
<path d="M72.60 51.90A12.60 12.60 0 1 1 60.00 39.30" fill="none" stroke="#3b8fd6" stroke-width="4.70" stroke-linecap="round"/>
<circle cx="60" cy="51.9" r="6.90" fill="#3db34a"/>
</g>
<text transform="translate(743.00 577.40) scale(0.9250 1)" font-size="38.66" font-weight="normal" fill="#1b1b1b" stroke="#f3f3f3" stroke-width="0.5">Тражи</text>
<rect x="3022.2" y="548.7" width="27.6" height="26.1" rx="3" fill="none" stroke="#1b1b1b" stroke-width="2.4"/>
<path d="M3143 547.2 L3172.3 577.2 M3172.3 547.2 L3143 577.2" stroke="#1b1b1b" stroke-width="2.4"/>
<text transform="translate(688.00 687.80) scale(0.8960 1)" font-size="38.37" font-weight="normal" fill="#1b1b1b" stroke="#f3f3f3" stroke-width="0.5">Име супстанце, ЦАС број, ЕЦ или Индекс</text>
<rect x="688.2" y="709.2" width="2486.6" height="84.1" rx="8" fill="#ffffff" stroke="#e3e3e3" stroke-width="2.4"/>
<path d="M688.2 785.5 Q688.2 793.3 696 793.3 H3167 Q3174.8 793.3 3174.8 785.5" fill="none" stroke="#8a8a8a" stroke-width="2.4"/>
<text transform="translate(701.70 769.00) scale(1.0191 1)" font-size="45.64" font-weight="normal" fill="#1b1b1b" stroke="#ffffff" stroke-width="0.5">111-11-5</text>
<rect x="683.6" y="815.7" width="731.7" height="89.6" rx="8" fill="#ffffff" stroke="#dcdcdc" stroke-width="2.4"/>
<line x1="929" y1="881" x2="940" y2="870" stroke="#74879a" stroke-width="5" stroke-linecap="round"/>
<circle cx="954" cy="855" r="18.5" fill="#cfe8fb" stroke="#74879a" stroke-width="3.2"/>
<text transform="translate(999.00 877.50) scale(0.9751 1)" font-size="45.06" font-weight="normal" fill="#1b1b1b" stroke="#ffffff" stroke-width="0.5">Тражити</text>
<text transform="translate(691.60 1011.40) scale(0.9548 1)" font-size="37.79" font-weight="normal" fill="#1b1b1b" stroke="#f3f3f3" stroke-width="0.5">Извор</text>
<text transform="translate(691.60 1098.00) scale(0.9154 1)" font-size="37.79" font-weight="normal" fill="#1b1b1b" stroke="#f3f3f3" stroke-width="0.5">Назив</text>
<text transform="translate(691.60 1183.60) scale(0.8090 1)" font-size="36.92" font-weight="normal" fill="#1b1b1b" stroke="#f3f3f3" stroke-width="0.5">CAS</text>
<text transform="translate(691.60 1269.80) scale(0.7970 1)" font-size="37.79" font-weight="normal" fill="#1b1b1b" stroke="#f3f3f3" stroke-width="0.5">ЕЦ</text>
<text transform="translate(691.60 1386.50) scale(0.9406 1)" font-size="36.77" font-weight="normal" fill="#1b1b1b" stroke="#f3f3f3" stroke-width="0.5">Класификација</text>
<rect x="1353.6" y="964" width="1817.2" height="64" rx="10" fill="#f7dd8a" stroke="#c49a55" stroke-width="2.4"/>
<clipPath id="gl2"><circle cx="1422.8" cy="994.8" r="20.5"/></clipPath>
<circle cx="1422.8" cy="994.8" r="21" fill="#fdb73f"/>
<g clip-path="url(#gl2)" stroke="#4a78b8" stroke-width="2.8" fill="none"><line x1="1399.8" y1="983.67" x2="1445.8" y2="983.67"/><line x1="1399.8" y1="995.22" x2="1445.8" y2="995.22"/><line x1="1422.8" y1="971.8" x2="1422.8" y2="1017.8"/><ellipse cx="1422.8" cy="994.8" rx="10.50" ry="21"/></g>
<rect x="1424.3" y="996.8" width="25" height="25" fill="#fdb73f" clip-path="url(#gl2)"/>
<circle cx="1422.8" cy="994.8" r="21" fill="none" stroke="#4a78b8" stroke-width="2.8"/>
<path d="M1430.2 1002 H1444.5 L1440 1006.5 L1447.7 1014.5 L1443 1019.6 L1435 1011.2 L1430.2 1016 Z" fill="#4a78b8"/>
<text transform="translate(1479.30 1011.00) scale(0.9381 1)" font-size="37.21" font-weight="normal" fill="#1b1b1b" stroke="#f7dd8a" stroke-width="0.5">ECHA, Број лица која врше пријаву: 1551</text>
<rect x="1354.2" y="1051.2" width="1816.6" height="71.6" rx="8" fill="#ffffff" stroke="#e3e3e3" stroke-width="2.4"/>
<path d="M1354.2 1115 Q1354.2 1122.8 1362 1122.8 H3163 Q3170.8 1122.8 3170.8 1115" fill="none" stroke="#8a8a8a" stroke-width="2.4"/>
<rect x="1368.4" y="1070.6" width="42.2" height="29.9" fill="#8ab6ee" stroke="#4f78b8" stroke-width="2.6"/>
<clipPath id="ukc"><rect x="1369.7" y="1071.9" width="39.6" height="27.3"/></clipPath>
<g clip-path="url(#ukc)"><path d="M1369.7 1071.9 L1409.3 1099.2 M1409.3 1071.9 L1369.7 1099.2" stroke="#ffffff" stroke-width="6"/><path d="M1369.7 1071.9 L1409.3 1099.2 M1409.3 1071.9 L1369.7 1099.2" stroke="#c94444" stroke-width="2.2"/><path d="M1389.5 1071 V1100 M1368 1085.5 H1411" stroke="#ffffff" stroke-width="7"/><path d="M1389.5 1071 V1100 M1368 1085.5 H1411" stroke="#c94444" stroke-width="3"/></g>
<text transform="translate(1427.00 1101.80) scale(0.9532 1)" font-size="37.65" font-weight="normal" fill="#1b1b1b" stroke="#ffffff" stroke-width="0.5">Methyl octanoate</text>
<path d="M3125 1080.5 L3137 1092.5 L3149 1080.5" fill="none" stroke="#1b1b1b" stroke-width="2.6" stroke-linecap="round" stroke-linejoin="round"/>
<rect x="1353.5" y="1137.5" width="1818.5" height="70.5" rx="9" fill="#ffffff" stroke="#f0f0f0" stroke-width="1.5"/>
<text transform="translate(1366.00 1187.30) scale(0.9964 1)" font-size="36.77" font-weight="normal" fill="#1b1b1b" stroke="#ffffff" stroke-width="0.5">111-11-5</text>
<rect x="1353.5" y="1224" width="1818.5" height="70.5" rx="9" fill="#ffffff" stroke="#f0f0f0" stroke-width="1.5"/>
<text transform="translate(1365.00 1273.80) scale(0.9527 1)" font-size="36.63" font-weight="normal" fill="#1b1b1b" stroke="#ffffff" stroke-width="0.5">203-835-0</text>
<rect x="1354.2" y="1310.8" width="1816.6" height="124.50000000000009" rx="8" fill="#ffffff" stroke="#e4e4e4" stroke-width="2.4"/>
<path d="M1425.2 1329.3 L1469.3 1373.3 L1425.2 1417.3 L1381.2 1373.3 Z" fill="#ffffff" stroke="#e8403a" stroke-width="5" stroke-linejoin="miter"/>
<path d="M1418.8 1352 Q1418.6 1348 1425.4 1348 Q1432.2 1348 1432.1 1352 L1429 1376.5 Q1428.5 1379.2 1425.4 1379.2 Q1422.3 1379.2 1421.8 1376.5 Z" fill="#000000"/><circle cx="1425.4" cy="1387.8" r="5.4" fill="#000000"/>
<text transform="translate(1502.60 1389.50) scale(0.9387 1)" font-size="37.79" font-weight="normal" fill="#454545" stroke="#ffffff" stroke-width="0.5">Сензиб. коже 1</text>
<text transform="translate(2061.70 1389.50) scale(0.8927 1)" font-size="37.79" font-weight="normal" fill="#454545" stroke="#ffffff" stroke-width="0.5">H317</text>
<text transform="translate(1353.80 1501.00) scale(0.9019 1)" font-size="38.66" font-weight="normal" fill="#2b73b1" stroke="#f3f3f3" stroke-width="0.5">ECHA страница с класификацијом</text>
<rect x="1352" y="1503.5" width="562" height="2.2" fill="#2b73b1"/>
<text transform="translate(1353.80 1571.50) scale(0.8998 1)" font-size="38.95" font-weight="normal" fill="#2b73b1" stroke="#f3f3f3" stroke-width="0.5">ECHA карта с информацијама о супстанци</text>
<rect x="1352" y="1574" width="701" height="2.2" fill="#2b73b1"/>
<rect x="684.6" y="1889.2" width="732.0" height="90.1" rx="8" fill="#ffffff" stroke="#d6d6d6" stroke-width="2.4"/>
<circle cx="836.0" cy="1933.6" r="5" fill="#8fb3e6" stroke="#5a84c2" stroke-width="2.8"/>
<circle cx="853.7" cy="1933.6" r="5" fill="#8fb3e6" stroke="#5a84c2" stroke-width="2.8"/>
<circle cx="871.4" cy="1933.6" r="5" fill="#8fb3e6" stroke="#5a84c2" stroke-width="2.8"/>
<text transform="translate(903.50 1949.70) scale(0.9234 1)" font-size="37.79" font-weight="normal" fill="#1b1b1b" stroke="#ffffff" stroke-width="0.5">остале класификације</text>
<rect x="2010.8" y="1890.1" width="731.5" height="87.2" rx="9" fill="#ffffff" stroke="#2c76ad" stroke-width="5.6"/>
<path d="M2164 1936 L2176.5 1950.3 L2208 1919.5" fill="none" stroke="#5a9e72" stroke-width="6" stroke-linejoin="miter"/>
<text transform="translate(2235.80 1950.40) scale(0.8555 1)" font-size="41.28" font-weight="normal" fill="#1b1b1b" stroke="#ffffff" stroke-width="0.5">Направити супстанцу</text>
<rect x="2759.7" y="1888.5" width="420.1" height="90.80000000000004" rx="8" fill="#ffffff" stroke="#d6d6d6" stroke-width="2.4"/>
<path d="M2874.5 1914.3 L2911 1950.8 M2911 1914.3 L2874.5 1950.8" stroke="#bf3b3b" stroke-width="7" stroke-linecap="square"/>
<path d="M2874.5 1914.3 L2911 1950.8 M2911 1914.3 L2874.5 1950.8" stroke="#f29a9a" stroke-width="1.8"/>
<text transform="translate(2943.00 1950.40) scale(0.8601 1)" font-size="41.28" font-weight="normal" fill="#1b1b1b" stroke="#ffffff" stroke-width="0.5">Откажи</text>
</svg></body></html>
